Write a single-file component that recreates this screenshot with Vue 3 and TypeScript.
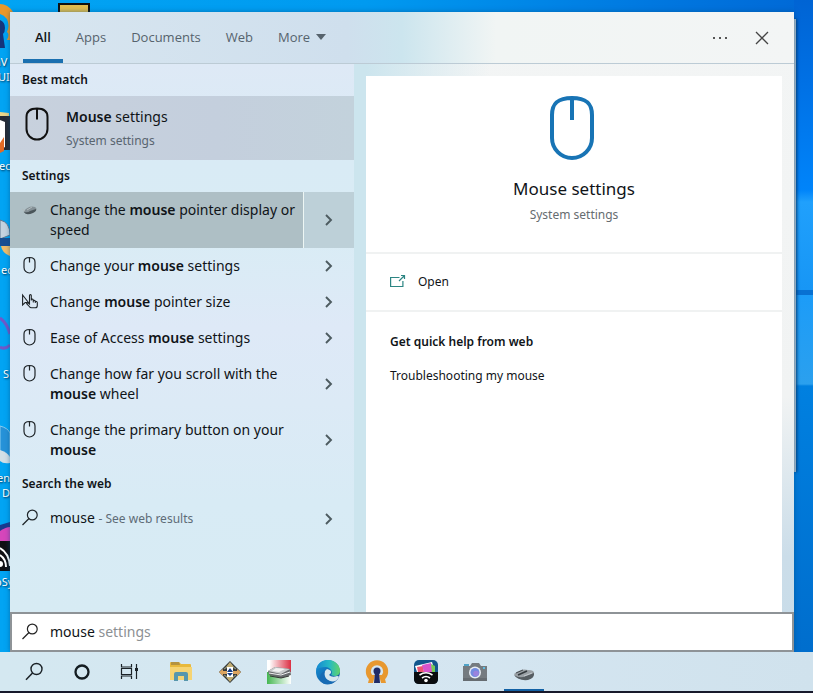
<script setup lang="ts">
import { computed, ref } from 'vue'

interface Segment {
  text: string
  match?: boolean
}

interface Result {
  id: string
  icon: 'device' | 'mouse' | 'pointer'
  label: Segment[]
}

const tabs = ['All', 'Apps', 'Documents', 'Web']
const activeTab = ref('All')
const selected = ref('display')
const query = ref('mouse')
const completion = computed(() => (query.value === 'mouse' ? ' settings' : ''))

const results: Result[] = [
  { id: 'display', icon: 'device', label: [{ text: 'Change the ' }, { text: 'mouse', match: true }, { text: ' pointer display or speed' }] },
  { id: 'settings', icon: 'mouse', label: [{ text: 'Change your ' }, { text: 'mouse', match: true }, { text: ' settings' }] },
  { id: 'size', icon: 'pointer', label: [{ text: 'Change ' }, { text: 'mouse', match: true }, { text: ' pointer size' }] },
  { id: 'ease', icon: 'mouse', label: [{ text: 'Ease of Access ' }, { text: 'mouse', match: true }, { text: ' settings' }] },
  { id: 'wheel', icon: 'mouse', label: [{ text: 'Change how far you scroll with the ' }, { text: 'mouse', match: true }, { text: ' wheel' }] },
  { id: 'primary', icon: 'mouse', label: [{ text: 'Change the primary button on your ' }, { text: 'mouse', match: true }] },
]
</script>

<template>
  <div class="desktop">
    <svg class="shortcuts" width="100" height="652" viewBox="0 0 100 652" aria-hidden="true">
      <path d="M0 4q8 0 13 8v28H7q3 -6 0 -8q3 -6 0 -13q-3 -4 -7 -5z" fill="#e9982b" />
      <path d="M0 20q5 2 5 8q0 4 -2 6l2 14H0z" fill="#15357c" />
      <rect x="59" y="4" width="30" height="20" fill="#e2bd4f" stroke="#111" stroke-width="2" />
      <path d="M0 116h10v34H0z" fill="#252a35" />
      <path d="M0 112l9 1v3H0z" fill="#e8d48a" />
      <path d="M0 120l5 2v25l-5 3z" fill="#fff" />
      <path d="M0 143l4 -6v14l-4 2z" fill="#e46a25" />
      <path d="M0 220q10 2 10 15l-10 4z" fill="#c5d3df" stroke="#60788f" />
      <path d="M0 238h10v8H0z" fill="#174f92" />
      <path d="M1 246h9v10q-8 -3 -9 -10z" fill="#eebd69" />
      <path d="M0 318q7 5 10 16M0 347q5 3 10 -2" fill="none" stroke="#7059c9" stroke-width="3" />
      <path d="M0 426q8 2 10 7v29q-6 -2 -10 -5z" fill="#2692d8" stroke="#8acbed" />
      <path d="M0 450q7 2 10 7v6q-7 1 -10 -2z" fill="#d3dfe6" />
      <path d="M0 525l10 -3v20H0z" fill="#193a8f" />
      <path d="M0 531q6 -4 10 -4v14H0z" fill="#d646bb" />
      <rect y="541" width="10" height="30" fill="#101014" />
      <path d="M0 548q9 5 10 18M0 555q6 4 6 12" fill="none" stroke="#fff" stroke-width="2" />
      <circle cx="0" cy="564" r="3" fill="#fff" />
      <g class="shortcut-names">
        <text x="-6" y="66">nV</text>
        <text x="-2" y="81">UI</text>
        <text x="-1" y="170">ec</text>
        <text x="1" y="274">ec</text>
        <text x="3" y="378">S</text>
        <text x="-3" y="482">en</text>
        <text x="2" y="497">D</text>
        <text x="-5" y="586">oSy</text>
      </g>
    </svg>

    <div class="wallpaper-light" aria-hidden="true"></div>
    <div class="window-behind" aria-hidden="true"></div>

    <main class="search-window">
      <header class="top-bar">
        <nav class="tabs" aria-label="Search filters">
          <button
            v-for="tab in tabs"
            :key="tab"
            type="button"
            class="tab"
            :class="{ active: activeTab === tab }"
            @click="activeTab = tab"
          >
            {{ tab }}
          </button>
          <button type="button" class="tab more">
            More
            <svg width="10" height="6" viewBox="0 0 10 6" aria-hidden="true"><path d="M0 0h10L5 6z" fill="currentColor" /></svg>
          </button>
        </nav>
        <div class="window-actions">
          <button type="button" class="action" aria-label="Options">
            <svg width="16" height="4" viewBox="0 0 16 4"><path d="M1 1h2v2H1zM7 1h2v2H7zM13 1h2v2h-2z" fill="#555" /></svg>
          </button>
          <button type="button" class="action" aria-label="Close">
            <svg width="14" height="14" viewBox="0 0 14 14"><path d="M1 1l12 12M13 1L1 13" stroke="#444" stroke-width="1.3" /></svg>
          </button>
        </div>
      </header>

      <div class="content">
        <section class="results">
          <h2>Best match</h2>
          <button type="button" class="best">
            <svg width="24" height="34" viewBox="0 0 24 34" aria-hidden="true"><path d="M12 1.500v11M12 1.500C5 1.500 1.500 4 1.500 10v12a10.500 10.500 0 0 0 21 0V10C22.500 4 19 1.500 12 1.500z" fill="none" stroke="#111" stroke-width="2" /></svg>
            <span class="best-text">
              <span class="best-title"><b>Mouse</b> settings</span>
              <span class="best-kind">System settings</span>
            </span>
          </button>

          <h2>Settings</h2>
          <ul>
            <li v-for="item in results" :key="item.id" :class="{ selected: selected === item.id }">
              <button type="button" class="result" @click="selected = item.id">
                <svg v-if="item.icon === 'device'" width="16" height="20" viewBox="0 0 16 20" aria-hidden="true">
                  <path d="M2 11q5 -6 11 -4q3 2 0 4q-6 4 -9 2q-3 0 -2 -2z" fill="#849096" />
                  <path d="M2 12q4 1 6 -1l6 -2q1 2 -3 4q-7 3 -9 -1z" fill="#4a555a" />
                  <path d="M5 10l5 -3M0 9l3 2" stroke="#b0babd" />
                </svg>
                <svg v-else-if="item.icon === 'mouse'" width="16" height="20" viewBox="0 0 16 20" aria-hidden="true">
                  <path d="M7.500 1.500v5M7.500 1.500C3.500 1.500 2 3 2 6v5.500a5.500 5.500 0 0 0 11 0V6C13 3 11.500 1.500 7.500 1.500z" fill="none" stroke="#1e2428" stroke-width="1.200" />
                </svg>
                <svg v-else width="16" height="20" viewBox="0 0 16 20" aria-hidden="true">
                  <path d="M.6 3v10l2.600 -2.500h3.200z" fill="none" stroke="#1e2428" stroke-width="1.100" />
                  <path d="M7.500 12V3.600q0 -1 .9 -1t.9 1V8.500v-1.300q2 -.5 2 1.300q1.800 -.6 2 .9q2 -.3 2 1.400v2.700q0 2.300 -2 2.300H9.500q-1.400 0 -2.200 -1.300L4.600 11.600q.8 -1.300 2.100 -.3z" fill="#dce8f4" stroke="#1e2428" stroke-width="1.100" />
                  <path d="M11.300 8.500v2M13.300 9.500v1.500" stroke="#1e2428" />
                </svg>
                <span class="label">
                  <template v-for="(part, i) in item.label" :key="i"><b v-if="part.match">{{ part.text }}</b><template v-else>{{ part.text }}</template></template>
                </span>
              </button>
              <button type="button" class="expand" aria-label="Show details">
                <svg width="8" height="12" viewBox="0 0 8 12"><path d="M1 1l5 5l-5 5" fill="none" stroke="#4d5b60" stroke-width="1.900" /></svg>
              </button>
            </li>
          </ul>

          <h2>Search the web</h2>
          <ul>
            <li>
              <button type="button" class="result">
                <svg width="16" height="20" viewBox="0 0 16 20" aria-hidden="true"><circle cx="10.300" cy="7" r="4.900" fill="none" stroke="#1e2428" stroke-width="1.200" /><path d="M7 10.500L.5 17" stroke="#1e2428" stroke-width="1.300" /></svg>
                <span class="label">mouse <span class="hint">- See web results</span></span>
              </button>
              <button type="button" class="expand" aria-label="Show details">
                <svg width="8" height="12" viewBox="0 0 8 12"><path d="M1 1l5 5l-5 5" fill="none" stroke="#4d5b60" stroke-width="1.900" /></svg>
              </button>
            </li>
          </ul>
        </section>

        <section class="preview">
          <div class="hero">
            <svg width="50" height="66" viewBox="0 0 50 66" aria-hidden="true"><path d="M23 3v22M23 3C9 3 3 8 3 20v23a20 20 0 0 0 40 0V20C43 8 37 3 23 3z" fill="none" stroke="#1874b5" stroke-width="4" /></svg>
            <h1>Mouse settings</h1>
            <p>System settings</p>
          </div>
          <div class="commands">
            <button type="button" class="open">
              <svg width="16" height="16" viewBox="0 0 16 16" aria-hidden="true"><path d="M9.500 3.500H.6v9h12.300V7M9 7l5.500 -5.500M11 1.500h3.500V5" fill="none" stroke="#2c8583" stroke-width="1.200" /></svg>
              Open
            </button>
          </div>
          <div class="help">
            <h3>Get quick help from web</h3>
            <a href="#troubleshooting">Troubleshooting my mouse</a>
          </div>
        </section>
      </div>

      <label class="search-box">
        <svg width="16" height="20" viewBox="0 0 16 20" aria-hidden="true"><circle cx="10.300" cy="7" r="4.900" fill="none" stroke="#222" stroke-width="1.200" /><path d="M7 10.500L.5 17" stroke="#222" stroke-width="1.300" /></svg>
        <span class="field">
          <input v-model="query" type="text" aria-label="Search" />
          <span class="ghost" aria-hidden="true"><span class="typed">{{ query }}</span>{{ completion }}</span>
        </span>
      </label>
    </main>

    <footer class="taskbar">
      <button type="button" aria-label="Search">
        <svg width="26" height="26" viewBox="0 0 26 26"><circle cx="15.500" cy="10" r="5.500" fill="none" stroke="#1b2227" stroke-width="1.400" /><path d="M11.500 14L5 20.800" stroke="#1b2227" stroke-width="1.500" /></svg>
      </button>
      <button type="button" aria-label="Cortana">
        <svg width="26" height="26" viewBox="0 0 26 26"><circle cx="12" cy="13" r="6.500" fill="none" stroke="#141d22" stroke-width="2.300" /></svg>
      </button>
      <button type="button" aria-label="Task view">
        <svg width="26" height="26" viewBox="0 0 26 26"><path d="M2.500 5v3h10V5M2.500 20v-3h10v3M2.500 9.500h10v6h-10zM17.500 5v15" fill="none" stroke="#1b2227" stroke-width="1.200" /><path d="M16 9h3v3h-3z" fill="#1b2227" /></svg>
      </button>
      <button type="button" aria-label="File Explorer">
        <svg width="26" height="26" viewBox="0 0 26 26"><path d="M2 4q0 -1 1 -1h8l2 2h9q1 0 1 1v15H2z" fill="#e8b93c" /><path d="M2 8h22v13H2z" fill="#f6d473" /><path d="M3 3h8l1 3H3z" fill="#b5933f" /><path d="M6 22v-7q0 -2 2 -2h10q2 0 2 2v7h-4v-5h-6v5z" fill="#5797ad" /></svg>
      </button>
      <button type="button" aria-label="Screen resize tool">
        <svg width="26" height="26" viewBox="0 0 26 26"><path d="M13 2l11 11l-11 11L2 13z" fill="#33383b" /><path d="M13 3l4 5H9zM13 23l4 -5H9z" fill="#c1ad73" /><path d="M2 13l4 -3v2h4v3H6v2zM24 13l-4 -3v2h-4v3h4v2z" fill="#dda55f" /><path d="M10 8l-3 2M16 8l3 2M10 18l-3 -2M16 18l3 -2" stroke="#8f8f72" stroke-width="1.500" /><rect x="10" y="8" width="6" height="10" fill="#fff" /><path d="M13 9l3 4h-6zM13 17l3 -3h-6z" fill="#173d83" /></svg>
      </button>
      <button type="button" aria-label="Scanner">
        <svg width="26" height="26" viewBox="0 0 26 26"><defs><linearGradient id="scanRed" x1="0" y1="0" x2="1" y2="0"><stop offset=".1" stop-color="#fff" /><stop offset="1" stop-color="#dc2f43" /></linearGradient><linearGradient id="scanGreen"><stop stop-color="#45b752" /><stop offset="1" stop-color="#fff" /></linearGradient></defs><path d="M1 1h24v12H1z" fill="url(#scanRed)" /><path d="M1 13h24v12H1z" fill="url(#scanGreen)" /><path d="M2 12l7 -4l15 2l1 6l-10 3L3 16z" fill="#686b6d" /><path d="M2 12l7 -4l15 2l-9 5z" fill="#c9cbcc" /><path d="M6 12l4 -3l9 1l-6 3z" fill="#f2f2f2" /><path d="M3 14l12 2l9 -3" fill="none" stroke="#f0f0f0" /><path d="M4 17l11 2l8 -2" fill="none" stroke="#333" /></svg>
      </button>
      <button type="button" aria-label="Microsoft Edge">
        <svg width="26" height="26" viewBox="0 0 26 26"><defs><linearGradient id="edgeTop"><stop stop-color="#1687d2" /><stop offset=".55" stop-color="#25b9c5" /><stop offset="1" stop-color="#63d368" /></linearGradient><linearGradient id="edgeBase" x2="1" y2="1"><stop stop-color="#1594d6" /><stop offset="1" stop-color="#124b9b" /></linearGradient></defs><circle cx="13" cy="13" r="12" fill="url(#edgeBase)" /><path d="M1 11C3 3 8 1 13 1c8 0 12 6 12 11c0 5 -5 6 -9 4c2 -2 1 -7 -5 -8c-5 0 -8 1 -10 3z" fill="url(#edgeTop)" /><path d="M14 16q3 3 8 1q2 0 2 1q-2 4 -6 5q-8 -1 -9 -7q0 -4 3 -6q5 1 4 4z" fill="#d7e7ef" /><path d="M10 12q-2 7 5 10q3 1 6 0q-9 7 -16 0q-1 -8 5 -10z" fill="#176bb4" /></svg>
      </button>
      <button type="button" aria-label="OpenVPN">
        <svg width="26" height="26" viewBox="0 0 26 26"><path d="M8 19.500A8.700 8.700 0 1 1 18 19.500" fill="none" stroke="#e8982f" stroke-width="5" /><path d="M6 16l-2 8h5l2 -8zM20 16l2 8h-5l-2 -8z" fill="#e8982f" /><circle cx="13" cy="12" r="3.500" fill="#202c67" /><path d="M11 13h4l1 11h-6z" fill="#202c67" /></svg>
      </button>
      <button type="button" aria-label="PhotoSync">
        <svg width="26" height="26" viewBox="0 0 26 26"><rect x="1" y="1" width="24" height="24" rx="5" fill="#12558c" /><path d="M2 7l17 -4l3 10H4z" fill="#fff" /><path d="M4 8l6 -1l1 6H5z" fill="#ed5672" /><path d="M9 6l9 -2l2 9h-9z" fill="#d654cc" /><path d="M18 5l4 2v6h-3z" fill="#75cb57" /><path d="M1 13h24v7q0 5 -5 5H6q-5 0 -5 -5z" fill="#090b0e" /><path d="M6.500 16q6.500 -4.500 13 0M9 19q4 -3 8 0" fill="none" stroke="#fff" stroke-width="1.600" /><circle cx="13" cy="21.500" r="1.800" fill="#fff" /></svg>
      </button>
      <button type="button" aria-label="Camera">
        <svg width="26" height="26" viewBox="0 0 26 26"><path d="M1 7h7l2 -3h7l2 3h6v15H1z" fill="#757b80" /><path d="M1 19h24v3H1z" fill="#666c71" /><path d="M2 5h5v2H2z" fill="#4fa3c8" /><path d="M21 8h2v2h-2z" fill="#60bde3" /><circle cx="13" cy="13.500" r="6" fill="#e8edf3" /><circle cx="13" cy="13.500" r="4.500" fill="#738ce0" /><circle cx="14" cy="14.500" r="2.800" fill="#9a83de" /></svg>
      </button>
      <button type="button" class="running" aria-label="Mouse properties">
        <svg width="26" height="26" viewBox="0 0 26 26"><path d="M3 15q7 -6 14 -4q7 0 6 4q-2 5 -10 5q-9 -1 -10 -5z" fill="#9aa0a5" /><path d="M3 16q6 4 12 1l8 -3q1 5 -6 7q-10 1 -14 -5z" fill="#565d62" /><path d="M7 16l9 -4" stroke="#343a3e" stroke-width="1.500" /><path d="M5 14l7 -3" stroke="#474d51" /><path d="M13 17l8 -3" stroke="#c3c9ce" /></svg>
      </button>
    </footer>
  </div>
</template>

<style>
body {
  margin: 0;
}
</style>

<style scoped>
* {
  box-sizing: border-box;
}

.desktop {
  position: relative;
  display: grid;
  grid-template-rows: 1fr auto;
  min-height: 100vh;
  overflow: hidden;
  background: linear-gradient(90deg, #02a4f3 0, #009af0 45%, #0078e0 80%, #0068d6);
  color: #101418;
  font-family: "Noto Sans", "Open Sans", sans-serif;
  font-size: 14px;
  line-height: 20px;
}

button,
input {
  font: inherit;
  color: inherit;
}

button {
  margin: 0;
  padding: 0;
  border: 0;
  background: none;
  text-align: left;
}

svg {
  display: block;
  flex: none;
}

h1, h2, h3, p, ul {
  margin: 0;
  padding: 0;
}

ul {
  list-style: none;
}

b {
  font-weight: 600;
}

.shortcuts {
  position: absolute;
  top: 0;
  left: 0;
}

.shortcut-names {
  fill: #fff;
  font-size: 11px;
  text-shadow: 1px 1px 2px #003050;
}

.wallpaper-light {
  position: absolute;
  top: 0;
  right: 0;
  bottom: 0;
  width: 19px;
  background: linear-gradient(#0064d4 0, #0070e4 80px, #0084fa 190px, #20a0fc 202px, #1796f5 290px, #0871d2 290px, #0871d2 295px, #1c9cf8 295px, #2ba0ee 384px, #0080e0 386px, #006bca);
}

.window-behind {
  position: absolute;
  top: 19px;
  right: 17px;
  width: 3px;
  height: 453px;
  background: #aebdca;
  box-shadow: 1px 0 3px #063e78;
}

.search-window {
  position: relative;
  display: flex;
  flex-direction: column;
  margin: 12px 19px 0 10px;
  background: linear-gradient(#f3f5f5 0, #f1f3f3 60%, #cbdde9 85%, #c8dce9);
  box-shadow: 0 0 5px #064a8090;
}

.top-bar {
  display: flex;
  justify-content: space-between;
  height: 52px;
  border-bottom: 1px solid #bccbd5;
  background: linear-gradient(90deg, #d8e6f0 0, #cfdfed 43%, #cce5ee 50%, #f1f5f4 62%, #f3f5f5);
}

.tabs {
  display: flex;
  gap: 1px;
  padding-left: 13px;
}

.tab {
  padding: 0 12px 1px;
  border-bottom: 4px solid transparent;
  border-top: 3px solid transparent;
  color: #56636d;
  font-family: "Open Sans", "Noto Sans", sans-serif;
  font-size: 13px;
}

.tab.active {
  border-bottom-color: #1b70b0;
  color: #101418;
  font-weight: 600;
}

.more {
  display: flex;
  align-items: center;
  gap: 6px;
}

.window-actions {
  display: flex;
  padding-right: 11px;
}

.action {
  display: grid;
  place-items: center;
  width: 42px;
}

.content {
  flex: 1;
  display: grid;
  grid-template-columns: 344px minmax(0, 1fr);
  gap: 12px;
  padding-right: 12px;
  background: linear-gradient(90deg, #cce5ee 0, #cce5ee 356px, transparent 480px);
}

.results {
  background: linear-gradient(#dee9f6 0, #d9ebf5 18%, #d9ecf5 32%, #dee9f7 48%, #dceaf6 62%, #d8ebf5 80%, #d7ebf4);
}

.results h2 {
  padding: 6px 12px;
  font-size: 12px;
  font-weight: 600;
}

.best {
  display: flex;
  gap: 17px;
  width: 100%;
  height: 64px;
  padding: 11px 15px;
  background: linear-gradient(90deg, #c8d1dd, #c4cfdd 60%, #c3d2dc);
}

.best-text {
  display: grid;
  gap: 4px;
}

.best-kind {
  color: #596570;
  font-size: 12px;
}

li {
  display: grid;
  grid-template-columns: minmax(0, 1fr) 50px;
}

.result {
  display: flex;
  gap: 12px;
  padding: 8px 0 8px 12px;
}

.selected {
  background: #bdd0d8;
}

.selected .result {
  border-right: 1px solid #edf6f4;
  background: #aebfc5;
}

.expand {
  display: grid;
  place-items: center;
}

.hint {
  color: #5e6c77;
  font-size: 12px;
}

.preview {
  margin-top: 12px;
  background: #fff;
}

.hero {
  display: flex;
  flex-direction: column;
  align-items: center;
  height: 178px;
  padding-top: 19px;
  border-bottom: 2px solid #f0f2f2;
}

.hero h1 {
  padding-top: 16px;
  font-size: 17px;
  font-weight: 400;
  line-height: 24px;
}

.hero p {
  padding-top: 4px;
  color: #666c70;
  font-size: 12px;
}

.commands {
  padding: 10px 24px;
  border-bottom: 2px solid #f0f2f2;
}

.open {
  display: flex;
  align-items: center;
  gap: 12px;
  height: 36px;
  font-size: 12px;
}

.help {
  display: grid;
  gap: 14px;
  padding: 20px 24px;
  font-size: 12px;
}

.help h3 {
  font-size: 12px;
  font-weight: 600;
}

.help a {
  color: inherit;
  text-decoration: none;
}

.search-box {
  display: flex;
  align-items: center;
  gap: 12px;
  height: 40px;
  padding: 0 10px;
  border: 2px solid #8e9397;
  background: #fff;
}

.field {
  flex: 1;
  display: grid;
}

.field input,
.ghost {
  grid-area: 1 / 1;
  padding: 0;
  white-space: pre;
}

.field input {
  width: 100%;
  border: 0;
  outline: 0;
  background: transparent;
}

.ghost {
  color: #8c9093;
  pointer-events: none;
}

.typed {
  visibility: hidden;
}

.taskbar {
  position: relative;
  display: flex;
  gap: 1px;
  height: 41px;
  padding-left: 10px;
  border-bottom: 2px solid #17192b;
  background: linear-gradient(90deg, #d4e8f1, #d5e6f1 50%, #d0e2ed);
}

.taskbar button {
  display: grid;
  place-items: center;
  width: 48px;
}

.taskbar .running {
  background: linear-gradient(#1261a5, #1261a5) center bottom / 40px 2px no-repeat;
}
</style>
